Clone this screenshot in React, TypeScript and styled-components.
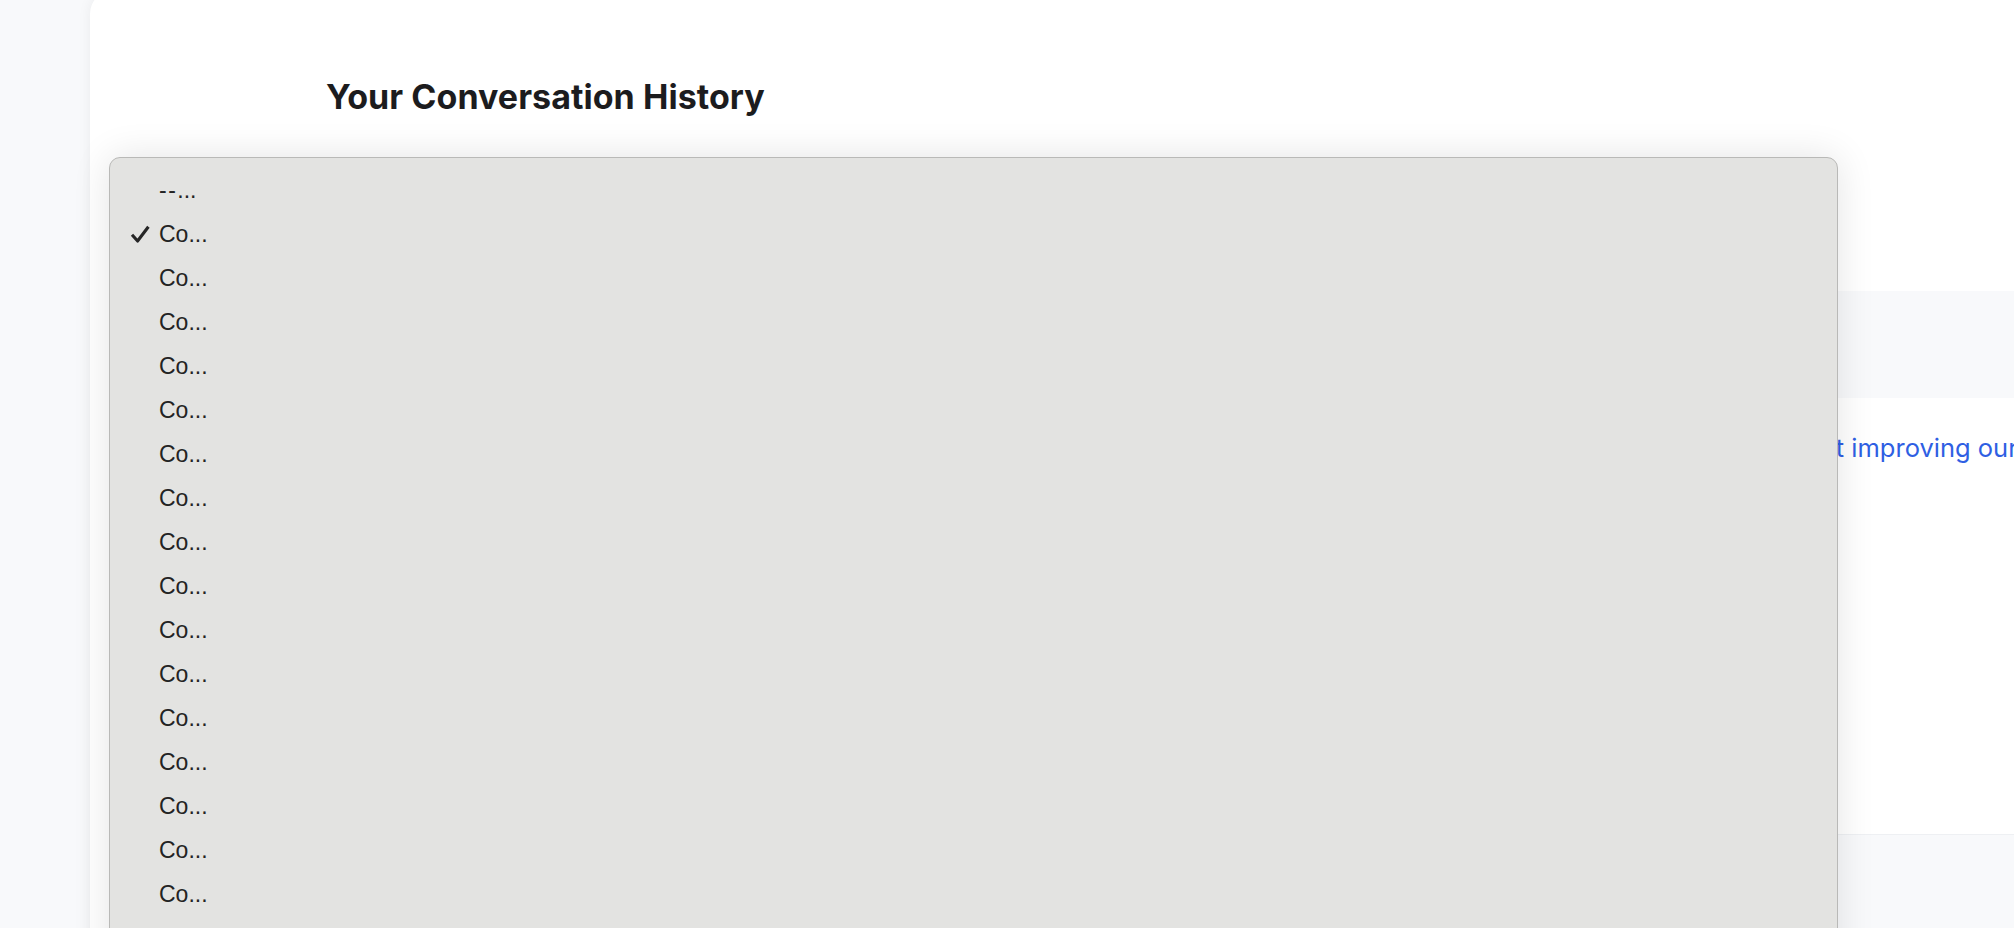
import React from "react";
import styled, { createGlobalStyle } from "styled-components";

const Global = createGlobalStyle`
  html, body { margin: 0; padding: 0; background: #f8f9fb; }
  body { font-family: Inter, "Liberation Sans", sans-serif; overflow: hidden; }
  * { box-sizing: border-box; }
`;

const Page = styled.div`
  position: relative;
  height: 100vh;
  overflow: hidden;
  padding-left: 90px;
`;

const Card = styled.main`
  margin-top: -10px;
  width: calc(100% + 40px);
  min-height: calc(100vh + 80px);
  background: #ffffff;
  border-radius: 24px;
  box-shadow: 0 0 14px rgba(15, 23, 42, 0.06);
  padding-top: 87px;
  display: flex;
  flex-direction: column;
`;

const Heading = styled.h1`
  margin: 0 0 0 236px;
  font-family: Inter, "Liberation Sans", sans-serif;
  font-weight: 700;
  font-size: 34px;
  line-height: 40px;
  letter-spacing: 0.05px;
  color: #1c1c1e;
`;

const Controls = styled.div`
  height: 174px;
`;

const Table = styled.section`
  margin-left: 236px;
  flex: 1;
  display: flex;
  flex-direction: column;
`;

const TableHead = styled.div`
  height: 107px;
  background: #f8f9fb;
`;

const TableRow = styled.div`
  height: 436px;
  padding-top: 34px;
  display: grid;
  grid-template-columns: 1377px 1fr;
`;

const Cell = styled.div`
  font-size: 25.5px;
  line-height: 32px;
  white-space: nowrap;
`;

const Link = styled.a`
  color: #2f5fe3;
  text-decoration: none;
  font-family: Inter, "Liberation Sans", sans-serif;
`;

const Footer = styled.div`
  flex: 1;
  background: #f8f9fb;
  border-top: 1px solid #eef0f3;
`;

const Popup = styled.div`
  position: absolute;
  left: 109px;
  top: 157px;
  width: 1729px;
  height: 840px;
  background: #e3e3e1;
  border: 1px solid #b9b9b7;
  border-radius: 11px;
  box-shadow: 0 0 38px rgba(0, 0, 0, 0.11);
  padding-top: 10px;
  font-family: "Liberation Sans", Arial, sans-serif;
  font-size: 23px;
  color: #232323;
`;

const Option = styled.div`
  height: 44px;
  display: flex;
  align-items: center;
  padding-left: 20px;
`;

const CheckSlot = styled.span`
  width: 29px;
  height: 44px;
  display: inline-flex;
  align-items: center;
`;

const Label = styled.span`
  line-height: 44px;
`;

const Dashes = styled.span`
  letter-spacing: 1.5px;
`;

const Check = () => (
  <svg width="20" height="18" viewBox="0 0 20 18">
    <path
      d="M2 9.8 L7.6 16 L18.4 1.8"
      fill="none"
      stroke="#262626"
      strokeWidth="3.1"
      strokeLinejoin="round"
    />
  </svg>
);

const options = ["--", ...Array.from({ length: 18 }, () => "Co")];

export default function App() {
  return (
    <>
      <Global />
      <Page>
        <Card>
          <Heading>Your Conversation History</Heading>
          <Controls />
          <Table>
            <TableHead />
            <TableRow>
              <Cell />
              <Cell>
                <Link href="#">Ideas about improving our support experience</Link>
              </Cell>
            </TableRow>
            <Footer />
          </Table>
        </Card>
        <Popup>
          {options.map((o, i) => (
            <Option key={i}>
              <CheckSlot>{i === 1 ? <Check /> : null}</CheckSlot>
              <Label>
                {i === 0 ? <Dashes>{o}</Dashes> : o}...
              </Label>
            </Option>
          ))}
        </Popup>
      </Page>
    </>
  );
}
